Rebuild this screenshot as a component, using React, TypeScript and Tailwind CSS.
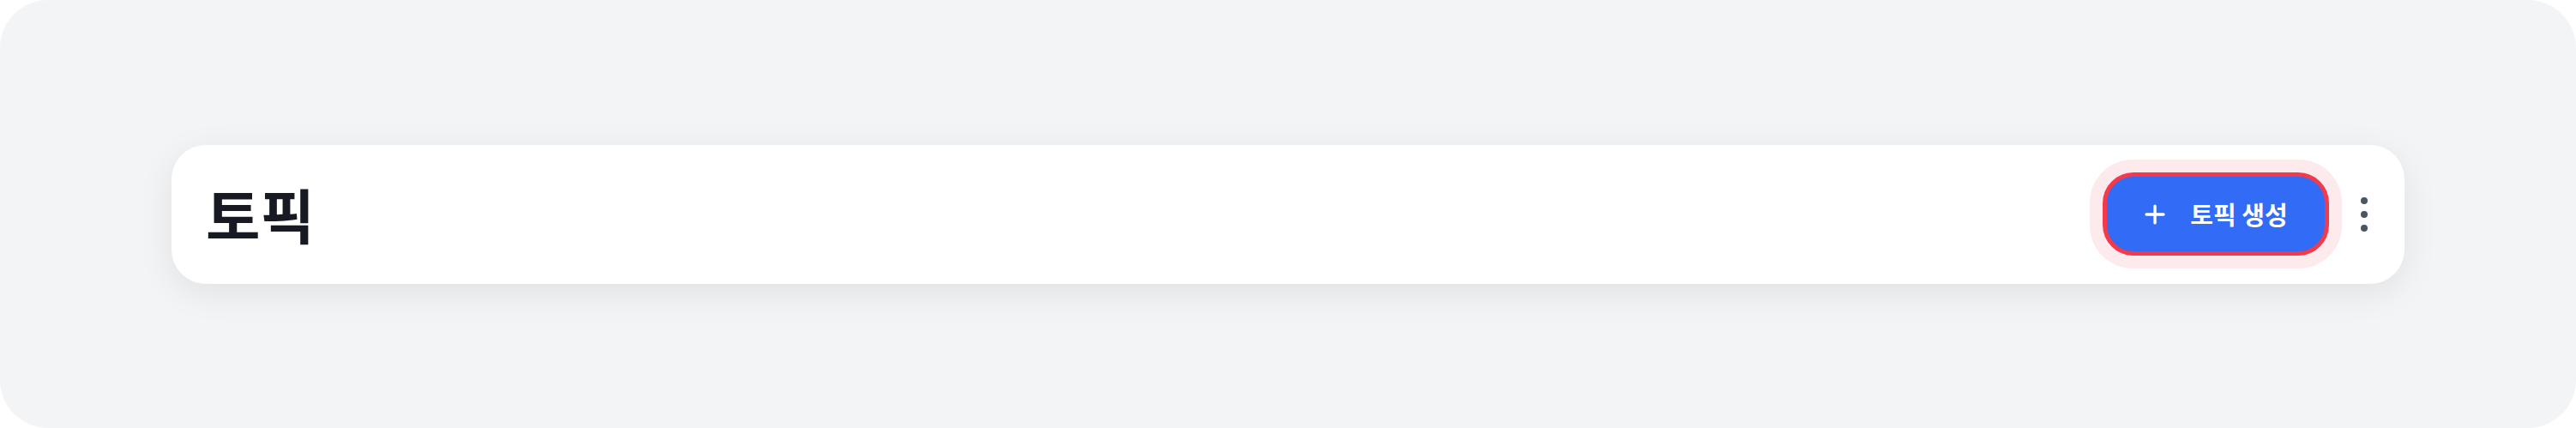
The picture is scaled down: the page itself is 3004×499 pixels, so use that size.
import { Plus } from 'lucide-react';

export default function App() {
  return (
    <div className="w-[3004px] h-[499px] bg-white">
      <div className="h-full w-full rounded-[56px] bg-[#f3f4f6] px-[200px] flex items-center">
        <div className="flex-1 h-[162px] rounded-[40px] bg-white shadow-[0_10px_40px_rgba(0,0,0,0.08)] px-[40px] flex items-center justify-between">
          <h1
            className="text-[69px] font-bold text-[#171a23] leading-none"
            style={{ fontFamily: '"Noto Sans CJK KR", "Noto Sans", sans-serif' }}
          >
            토픽
          </h1>
          <div className="flex items-center gap-[19px]">
            <div className="rounded-[50px] bg-[#fdeaec] p-[15px]">
              <button
                className="h-[97px] w-[264px] rounded-[36px] border-[5px] border-[#f23a4d] bg-[#316bf6] text-white flex items-center justify-center gap-[24px] pr-[4px]"
                style={{ fontFamily: '"Noto Sans CJK KR", "Noto Sans", sans-serif' }}
              >
                <Plus className="w-[34px] h-[34px]" strokeWidth={2.4} />
                <span className="text-[29px] font-bold leading-none">토픽 생성</span>
              </button>
            </div>
            <div className="flex flex-col gap-[8px] w-[14px] items-center">
              <span className="w-[8px] h-[8px] rounded-full bg-[#4b5563]" />
              <span className="w-[8px] h-[8px] rounded-full bg-[#4b5563]" />
              <span className="w-[8px] h-[8px] rounded-full bg-[#4b5563]" />
            </div>
          </div>
        </div>
      </div>
    </div>
  );
}
